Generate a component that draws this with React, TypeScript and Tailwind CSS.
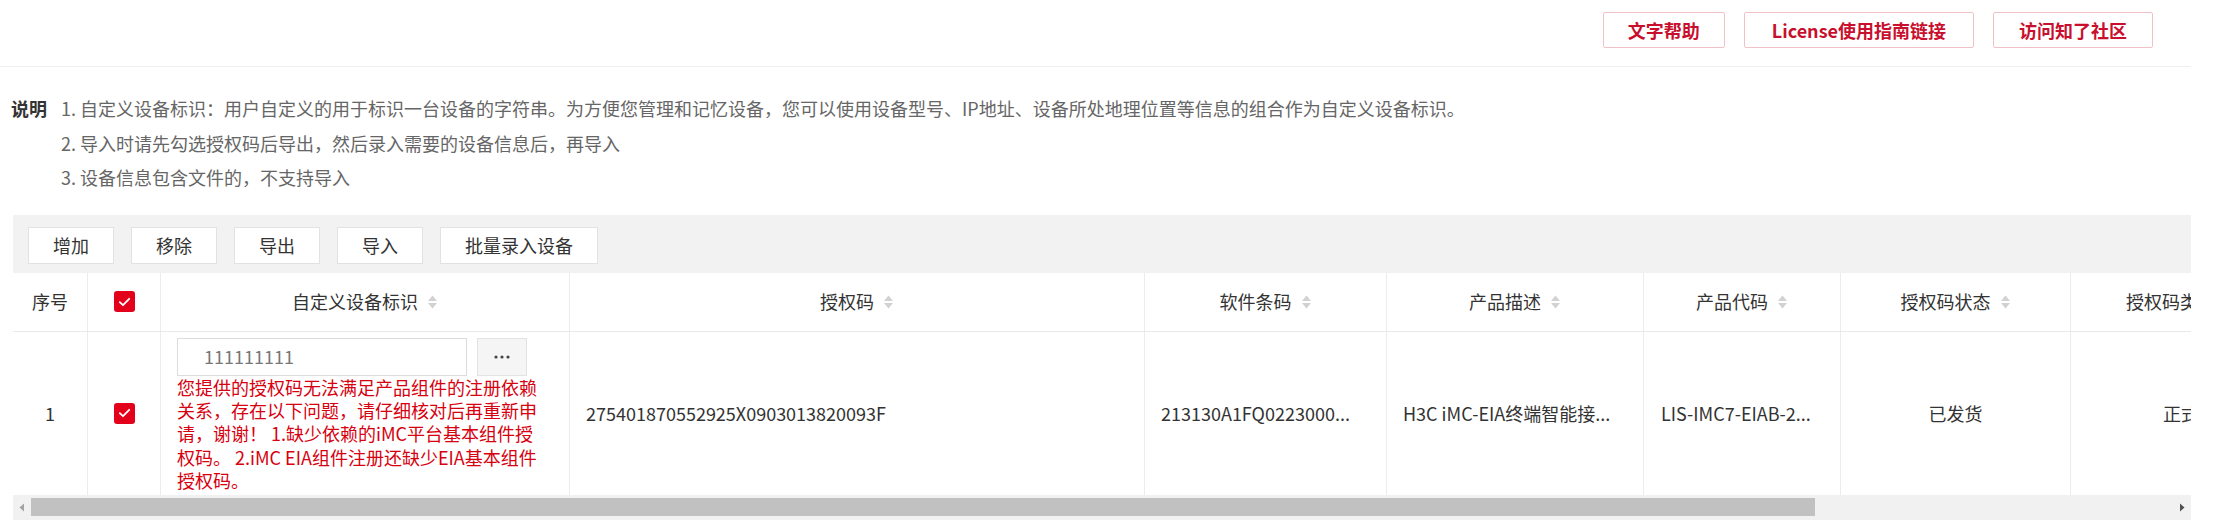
import React from "react";

const cols = "grid grid-cols-[75px_73px_409px_575px_242px_257px_197px_230px_220px]";

function SortIcon() {
  return (
    <svg width="11" height="16" viewBox="0 0 11 16" className="ml-[9px] shrink-0">
      <path d="M5.5 1.5 L10 7 H1 Z" fill="#d2d2d2" />
      <path d="M5.5 14.5 L10 9 H1 Z" fill="#d2d2d2" />
    </svg>
  );
}

function Checked() {
  return (
    <span className="flex h-[21px] w-[21px] items-center justify-center rounded-[3px] bg-[#e3001b]">
      <svg width="13" height="10" viewBox="0 0 13 10">
        <path d="M1.8 5.2 L5 8.2 L11.2 1.8" stroke="white" strokeWidth="1.8" fill="none" strokeLinecap="round" strokeLinejoin="round" />
      </svg>
    </span>
  );
}

function HeadCell({ label, sort = true, last = false }: { label: string; sort?: boolean; last?: boolean }) {
  return (
    <div className={`flex items-center justify-center overflow-hidden whitespace-nowrap ${last ? "" : "border-r border-[#ececec]"}`}>
      <span>{label}</span>
      {sort && <SortIcon />}
    </div>
  );
}

const links = [
  { label: "文字帮助", pad: "px-[24px]" },
  { label: "License使用指南链接", pad: "px-[27px]" },
  { label: "访问知了社区", pad: "px-[25px]" },
];

export default function App() {
  return (
    <div className="h-[520px] w-full overflow-hidden bg-white font-['Noto_Sans_CJK_SC',sans-serif] text-[18px] text-[#333]">
      <div className="pr-[48px]">
        {/* top links */}
        <div className="flex h-[66px] justify-end gap-[19px] pr-[38px] pt-[12px]">
          {links.map((l) => (
            <button
              key={l.label}
              className={`h-[36px] rounded-[2px] border border-[#f0c2c6] bg-white ${l.pad} text-[18px] leading-none font-semibold text-[#c8102e]`}
            >
              {l.label}
            </button>
          ))}
        </div>
        <div className="h-px bg-[#efefef]" />

        {/* notes */}
        <div className="flex pl-[11px] pt-[24px]">
          <div className="w-[50px] font-bold leading-[34.5px] text-[#333]">说明</div>
          <div className="leading-[34.5px] text-[#666]">
            <p>1. 自定义设备标识：用户自定义的用于标识一台设备的字符串。为方便您管理和记忆设备，您可以使用设备型号、IP地址、设备所处地理位置等信息的组合作为自定义设备标识。</p>
            <p>2. 导入时请先勾选授权码后导出，然后录入需要的设备信息后，再导入</p>
            <p>3. 设备信息包含文件的，不支持导入</p>
          </div>
        </div>

        {/* toolbar */}
        <div className="ml-[13px] mt-[20px] flex h-[58px] gap-[17px] bg-[#f2f2f2] pl-[15px] pt-[12px]">
          {["增加", "移除", "导出", "导入", "批量录入设备"].map((t) => (
            <button
              key={t}
              className="h-[37px] border border-[#e2e2e2] bg-white px-[24px] text-[18px] leading-none text-[#333]"
            >
              {t}
            </button>
          ))}
        </div>

        {/* table */}
        <div className="ml-[13px] overflow-hidden">
          <div className={`${cols} h-[59px] border-b border-[#e8e8e8]`}>
            <HeadCell label="序号" sort={false} />
            <div className="flex items-center justify-center border-r border-[#ececec]">
              <Checked />
            </div>
            <HeadCell label="自定义设备标识" />
            <HeadCell label="授权码" />
            <HeadCell label="软件条码" />
            <HeadCell label="产品描述" />
            <HeadCell label="产品代码" />
            <HeadCell label="授权码状态" />
            <HeadCell label="授权码类型" last />
          </div>

          <div className={`${cols} h-[163px]`}>
            <div className="flex items-center justify-center border-r border-[#ececec]">1</div>
            <div className="flex items-center justify-center border-r border-[#ececec]">
              <Checked />
            </div>
            <div className="border-r border-[#ececec] px-[16px] pt-[6px]">
              <div className="flex gap-[10px]">
                <div className="flex h-[38px] w-[290px] items-center border border-[#dcdcdc] pl-[26px] text-[#777]">
                  111111111
                </div>
                <div className="flex h-[38px] w-[50px] items-center justify-center border border-[#e3e3e3] bg-[#f5f5f5]">
                  <svg width="16" height="4" viewBox="0 0 16 4">
                    <circle cx="2" cy="2" r="1.6" fill="#444" />
                    <circle cx="8" cy="2" r="1.6" fill="#444" />
                    <circle cx="14" cy="2" r="1.6" fill="#444" />
                  </svg>
                </div>
              </div>
              <div className="whitespace-nowrap leading-[23.4px] text-[#d7000f]">
                <div>您提供的授权码无法满足产品组件的注册依赖</div>
                <div>关系，存在以下问题，请仔细核对后再重新申</div>
                <div>请，谢谢！ 1.缺少依赖的iMC平台基本组件授</div>
                <div>权码。 2.iMC EIA组件注册还缺少EIA基本组件</div>
                <div>授权码。</div>
              </div>
            </div>
            <div className="flex items-center border-r border-[#ececec] pl-[16px]">275401870552925X0903013820093F</div>
            <div className="flex items-center whitespace-nowrap border-r border-[#ececec] pl-[16px]">213130A1FQ0223000...</div>
            <div className="flex items-center whitespace-nowrap border-r border-[#ececec] pl-[16px]">H3C iMC-EIA终端智能接...</div>
            <div className="flex items-center whitespace-nowrap border-r border-[#ececec] pl-[17px]">LIS-IMC7-EIAB-2...</div>
            <div className="flex items-center justify-center border-r border-[#ececec]">已发货</div>
            <div className="flex items-center justify-center">正式</div>
          </div>

          {/* horizontal scrollbar */}
          <div className="flex h-[25px] w-[2178px] items-center bg-[#f1f1f1]">
            <div className="flex w-[18px] items-center justify-center">
              <svg width="6" height="9" viewBox="0 0 6 9">
                <path d="M5 0.5 L0.5 4.5 L5 8.5 Z" fill="#a3a3a3" />
              </svg>
            </div>
            <div className="flex-1">
              <div className="h-[18px] w-[1784px] bg-[#c1c1c1]" />
            </div>
            <div className="flex w-[18px] items-center justify-center">
              <svg width="6" height="9" viewBox="0 0 6 9">
                <path d="M1 0.5 L5.5 4.5 L1 8.5 Z" fill="#505050" />
              </svg>
            </div>
          </div>
        </div>
      </div>
    </div>
  );
}
